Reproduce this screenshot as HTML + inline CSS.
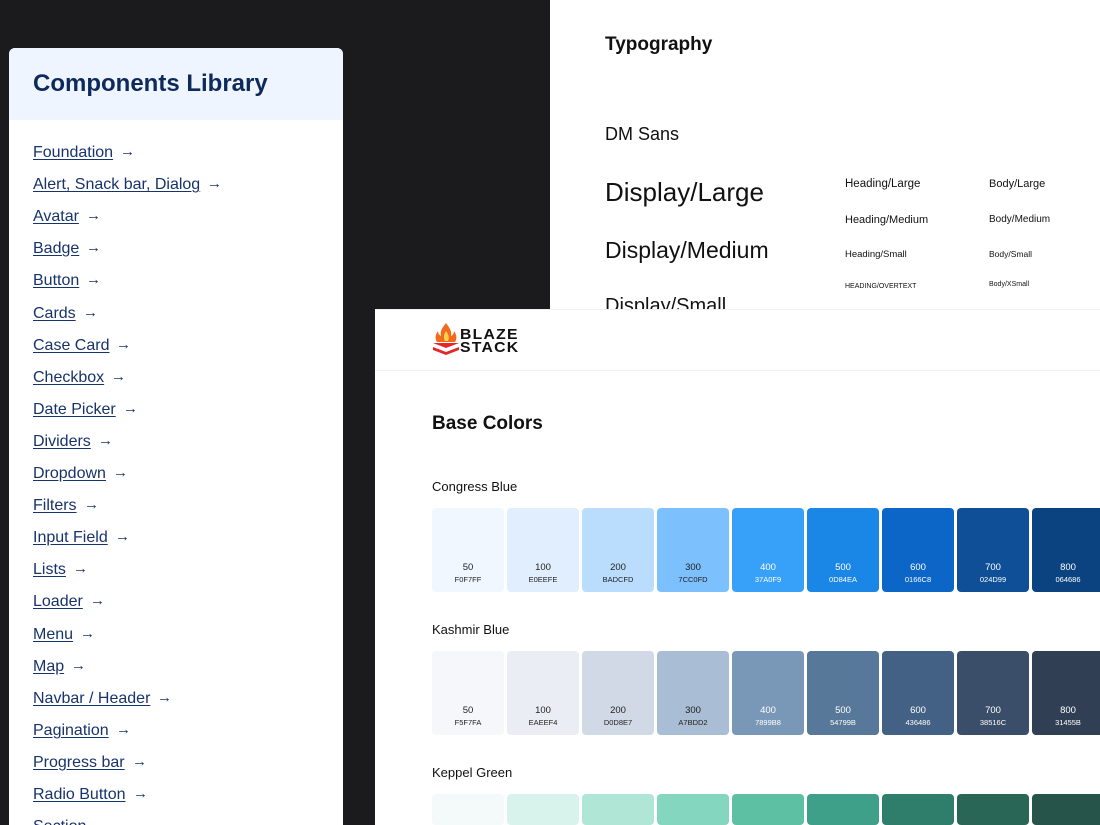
<!DOCTYPE html>
<html><head><meta charset="utf-8"><style>
*{margin:0;padding:0;box-sizing:border-box}
html,body{width:1100px;height:825px;overflow:hidden}
body{background:#1b1a1c;position:relative;font-family:"Liberation Sans","DejaVu Sans",sans-serif}
.abs{position:absolute}
#typo{left:550px;top:0;width:550px;height:310px;background:#fff;overflow:hidden}
#typo div{position:absolute;color:#111;white-space:nowrap}
#left{left:9px;top:48px;width:334px;height:777px;background:#fff;border-radius:6px 6px 0 0;overflow:hidden}
#left .hd{height:72px;background:#eef5fe;padding:22px 0 0 24px;font-size:24px;font-weight:bold;color:#0e2a5c}
#left a{position:absolute;left:24px;font-size:16px;color:#17336b;text-decoration:underline;text-underline-offset:2px;white-space:nowrap}
#base{left:375px;top:309px;width:725px;height:516px;background:#fff;border-top:1px solid #eef0f3;overflow:hidden}
.sw{position:absolute;width:72px;height:84px;border-radius:4px;text-align:center;font-size:9px}
.sw b{position:absolute;left:0;right:0;top:54px;font-weight:normal;font-size:9.5px}
.sw i{position:absolute;left:0;right:0;top:67px;font-style:normal;font-size:7.5px}
.lbl{position:absolute;left:57px;font-size:13px;color:#111}
</style></head><body>
<div id="typo" class="abs">
<div style="left:55px;top:34px;font-size:19px;font-weight:bold">Typography</div>
<div style="left:55px;top:124px;font-size:18px">DM Sans</div>
<div style="left:55px;top:177px;font-size:26px">Display/Large</div>
<div style="left:55px;top:237px;font-size:23px">Display/Medium</div>
<div style="left:55px;top:295px;font-size:20px">Display/Small</div>
<div style="left:295px;top:178px;font-size:11.5px">Heading/Large</div>
<div style="left:295px;top:214px;font-size:11px">Heading/Medium</div>
<div style="left:295px;top:249px;font-size:9.5px">Heading/Small</div>
<div style="left:295px;top:283px;font-size:7px">HEADING/OVERTEXT</div>
<div style="left:439px;top:178px;font-size:11px">Body/Large</div>
<div style="left:439px;top:214px;font-size:10px">Body/Medium</div>
<div style="left:439px;top:249px;font-size:8.5px">Body/Small</div>
<div style="left:439px;top:281px;font-size:7px">Body/XSmall</div>
</div>
<div id="left" class="abs"></div>
<div id="base" class="abs">
<svg class="abs" style="left:56px;top:12px" width="30" height="34" viewBox="0 0 30 34">
<path d="M15 1C11 6 9 9 10 14c-2-1-3-3-3-5-3 4-3 8-1 11h18c2-3 2-7-1-11 0 2-1 4-3 5 1-5-2-9-5-13z" fill="#f26b1d"/>
<path d="M15 9c-2 3-3 6-1 10h3c2-4 0-7-2-10z" fill="#ffd24a"/>
<path d="M2 21h26l-13 5z" fill="#e4262b"/><path d="M2 25l13 5 13-5v3l-13 5-13-5z" fill="#e4262b"/>
</svg>
<div class="abs" style="left:85px;top:18px;font-size:15px;font-weight:900;line-height:13px;color:#111;letter-spacing:1.2px;transform:scaleX(1.05);transform-origin:left">BLAZE<br>STACK</div>
<div class="abs" style="left:0;right:0;top:60px;height:1px;background:#f1f2f4"></div>
<div class="abs" style="left:57px;top:103px;font-size:19px;font-weight:bold;color:#111">Base Colors</div>
<div class="lbl" style="top:169px">Congress Blue</div>
<div class="lbl" style="top:312px">Kashmir Blue</div>
<div class="lbl" style="top:455px">Keppel Green</div>
</div>
<script>
var L=document.getElementById('left');
var items=["Foundation","Alert, Snack bar, Dialog","Avatar","Badge","Button","Cards","Case Card","Checkbox","Date Picker","Dividers","Dropdown","Filters","Input Field","Lists","Loader","Menu","Map","Navbar / Header","Pagination","Progress bar","Radio Button","Section"];
L.innerHTML='<div class="hd">Components Library</div>';
items.forEach(function(t,i){var y=(96+i*32.1);var a=document.createElement('a');a.style.top=y+'px';a.innerHTML=t;L.appendChild(a);
var s=document.createElement('span');s.className='abs';s.textContent='→';s.style.cssText='top:'+(y-1)+'px;color:#17336b;font-size:15px';L.appendChild(s);
var w=document.createElement('span');w.style.cssText='position:absolute;visibility:hidden;font-size:16px';w.textContent=t;L.appendChild(w);s.style.left=(24+w.offsetWidth+7)+'px';w.remove();});
var B=document.getElementById('base');
var rows=[[["50","F0F7FF","#f0f7ff"],["100","E0EEFE","#e0eefe"],["200","BADCFD","#badcfd"],["300","7CC0FD","#7cc0fd"],["400","37A0F9","#37a0f9"],["500","0D84EA","#1a86e6"],["600","0166C8","#0b66c8"],["700","024D99","#0e4f98"],["800","064686","#0b4280"]],
[["50","F5F7FA","#f5f7fa"],["100","EAEEF4","#eaeef4"],["200","D0D8E7","#d2d9e6"],["300","A7BDD2","#a9bdd4"],["400","7899B8","#7997b6"],["500","54799B","#577898"],["600","436486","#436184"],["700","38516C","#3a4e69"],["800","31455B","#313f55"]],
[["50","","#f4faf9"],["100","","#d8f3eb"],["200","","#b0e6d5"],["300","","#84d6be"],["400","","#5ec0a2"],["500","","#3ea088"],["600","","#2e7e6b"],["700","","#2a6656"],["800","","#27544a"]]];
rows.forEach(function(r,ri){r.forEach(function(c,ci){var d=document.createElement('div');d.className='sw';d.style.left=(57+ci*75)+'px';d.style.top=(198+ri*143)+'px';d.style.height=(ri==2?'31px':'84px');d.style.background=c[2];
d.style.color=ci>=4?'#fff':'#222';if(c[1])d.innerHTML='<b>'+c[0]+'</b><i>'+c[1]+'</i>';B.appendChild(d);});});
</script>
</body></html>
